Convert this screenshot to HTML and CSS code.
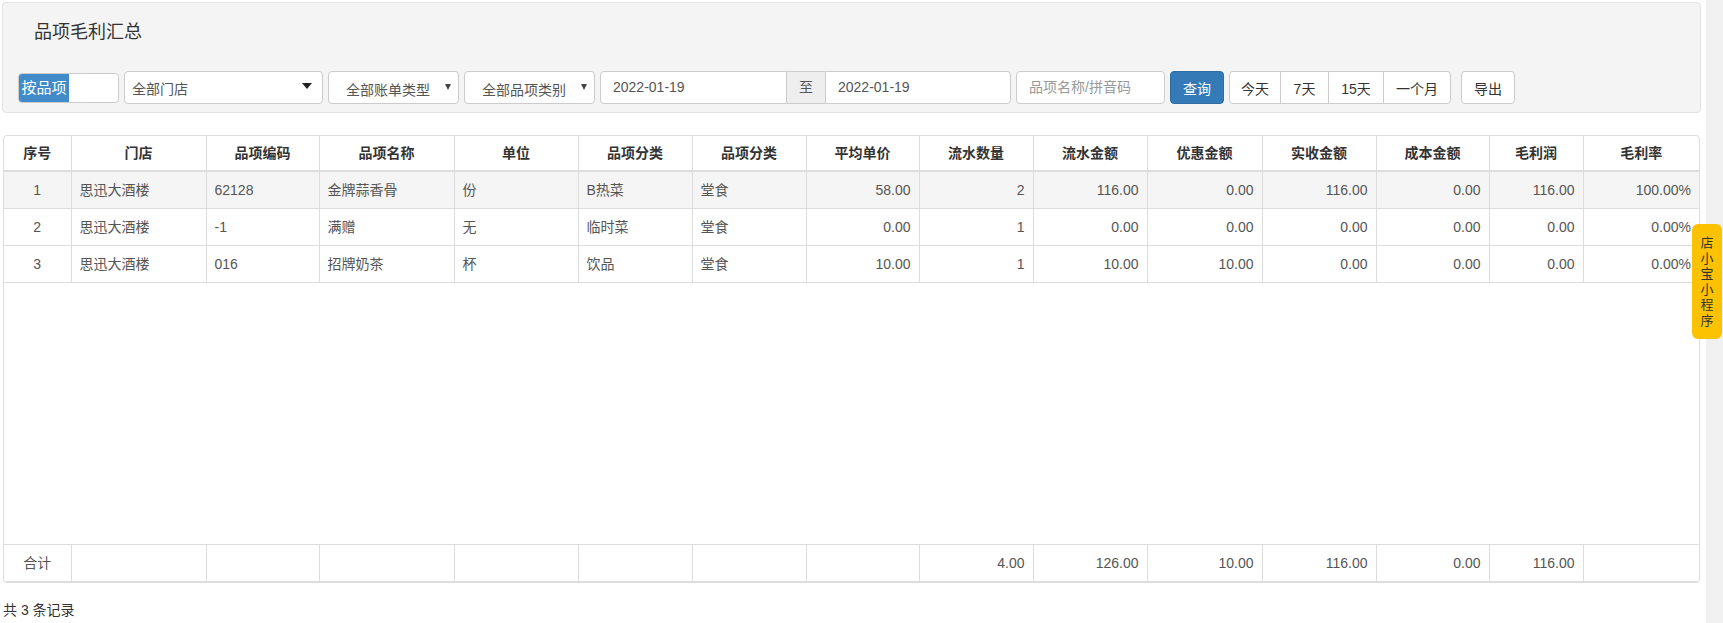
FILE: index.html
```html
<!DOCTYPE html>
<html lang="zh-CN">
<head>
  <meta charset="UTF-8">
  <title>品项毛利汇总</title>
  <link rel="stylesheet" href="styles.css">
</head>
<body>
  <div class="page">
    <div class="well">
      <h4 class="title">品项毛利汇总</h4>

      <div class="toolbar">
        <div class="switch"><span class="switch-on">按品项</span></div>

        <div class="select select-store">
          <span>全部门店</span>
          <i class="caret-big"></i>
        </div>
        <div class="select select-sm">
          <span>全部账单类型</span>
          <i class="caret-sm"></i>
        </div>
        <div class="select select-sm">
          <span>全部品项类别</span>
          <i class="caret-sm"></i>
        </div>

        <div class="date-range">
          <div class="input date-input">2022-01-19</div>
          <div class="addon">至</div>
          <div class="input date-input date-end">2022-01-19</div>
        </div>

        <div class="input search placeholder">品项名称/拼音码</div>

        <button class="btn btn-primary">查询</button>

        <div class="btn-group">
          <button class="btn btn-today">今天</button>
          <button class="btn btn-7">7天</button>
          <button class="btn btn-15">15天</button>
          <button class="btn btn-month">一个月</button>
        </div>

        <button class="btn btn-export">导出</button>
      </div>
    </div>

    <div class="grid">
      <table class="data">
        <colgroup>
          <col style="width:67px"><col style="width:135px"><col style="width:113px"><col style="width:135px">
          <col style="width:124px"><col style="width:114px"><col style="width:114px"><col style="width:113px">
          <col style="width:114px"><col style="width:114px"><col style="width:115px"><col style="width:114px">
          <col style="width:113px"><col style="width:94px"><col style="width:116px">
        </colgroup>
        <thead>
          <tr>
            <th>序号</th><th>门店</th><th>品项编码</th><th>品项名称</th><th>单位</th>
            <th>品项分类</th><th>品项分类</th><th>平均单价</th><th>流水数量</th><th>流水金额</th>
            <th>优惠金额</th><th>实收金额</th><th>成本金额</th><th>毛利润</th><th>毛利率</th>
          </tr>
        </thead>
        <tbody>
          <tr class="active">
            <td class="c">1</td><td>思迅大酒楼</td><td>62128</td><td>金牌蒜香骨</td><td>份</td>
            <td>B热菜</td><td>堂食</td><td class="r">58.00</td><td class="r">2</td><td class="r">116.00</td>
            <td class="r">0.00</td><td class="r">116.00</td><td class="r">0.00</td><td class="r">116.00</td><td class="r">100.00%</td>
          </tr>
          <tr>
            <td class="c">2</td><td>思迅大酒楼</td><td>-1</td><td>满赠</td><td>无</td>
            <td>临时菜</td><td>堂食</td><td class="r">0.00</td><td class="r">1</td><td class="r">0.00</td>
            <td class="r">0.00</td><td class="r">0.00</td><td class="r">0.00</td><td class="r">0.00</td><td class="r">0.00%</td>
          </tr>
          <tr>
            <td class="c">3</td><td>思迅大酒楼</td><td>016</td><td>招牌奶茶</td><td>杯</td>
            <td>饮品</td><td>堂食</td><td class="r">10.00</td><td class="r">1</td><td class="r">10.00</td>
            <td class="r">10.00</td><td class="r">0.00</td><td class="r">0.00</td><td class="r">0.00</td><td class="r">0.00%</td>
          </tr>
        </tbody>
      </table>

      <table class="data total">
        <colgroup>
          <col style="width:67px"><col style="width:135px"><col style="width:113px"><col style="width:135px">
          <col style="width:124px"><col style="width:114px"><col style="width:114px"><col style="width:113px">
          <col style="width:114px"><col style="width:114px"><col style="width:115px"><col style="width:114px">
          <col style="width:113px"><col style="width:94px"><col style="width:116px">
        </colgroup>
        <tr>
          <td class="c">合计</td><td></td><td></td><td></td><td></td>
          <td></td><td></td><td></td><td class="r">4.00</td><td class="r">126.00</td>
          <td class="r">10.00</td><td class="r">116.00</td><td class="r">0.00</td><td class="r">116.00</td><td></td>
        </tr>
      </table>
    </div>

    <p class="records">共 3 条记录</p>
  </div>

  <div class="scrollbar"></div>

  <!-- 右侧悬浮：店小宝小程序 -->
  <div class="side-tab">
    <span>店</span><span>小</span><span>宝</span><span>小</span><span>程</span><span>序</span>
  </div>
</body>
</html>
```

FILE: styles.css
```css
* {
  box-sizing: border-box;
}

body {
  margin: 0;
  height: 623px;
  overflow: hidden;
  display: flex;
  font-family: "Liberation Sans", "Noto Sans CJK SC", sans-serif;
  font-size: 14px;
  color: #333;
  background: #fff;
}

.page {
  flex: 1;
  padding: 2px 5px 0 2px;
}

.scrollbar {
  width: 18px;
  background: #f1f1f1;
}

/* 顶部查询区 */
.well {
  height: 111px;
  background: #f4f4f4;
  border: 1px solid #e3e3e3;
  border-radius: 4px;
  padding: 16px 15px 0;
}

.title {
  margin: 0 0 26px 16px;
  font-size: 18px;
  line-height: 26px;
  font-weight: normal;
  color: #333;
}

.toolbar {
  display: flex;
  align-items: center;
  gap: 5px;
  height: 33px;
}

.switch {
  width: 101px;
  height: 30px;
  border: 1px solid #ccc;
  border-radius: 4px;
  background: #fff;
  overflow: hidden;
}

.switch-on {
  display: block;
  width: 50px;
  height: 100%;
  background: #428bca;
  color: #fff;
  font-size: 15px;
  line-height: 28px;
  text-align: center;
}

.select {
  height: 33px;
  display: flex;
  align-items: center;
  justify-content: space-between;
  background: #fff;
  border: 1px solid #ccc;
  border-radius: 4px;
  color: #555;
}

.select-store {
  width: 199px;
  padding: 0 10px 0 7px;
}

.select-sm {
  width: 131px;
  padding: 3px 7px 0 17px;
}

.caret-big {
  width: 0;
  height: 0;
  border-top: 6px solid #222;
  border-left: 5px solid transparent;
  border-right: 5px solid transparent;
  margin-bottom: 4px;
}

.caret-sm {
  width: 0;
  height: 0;
  border-top: 6px solid #444;
  border-left: 3px solid transparent;
  border-right: 3px solid transparent;
  margin-bottom: 5px;
}

.date-range {
  display: flex;
}

.input {
  height: 33px;
  padding: 0 12px;
  line-height: 31px;
  background: #fff;
  border: 1px solid #ccc;
  border-radius: 4px;
  color: #555;
}

.date-input {
  width: 187px;
  border-radius: 4px 0 0 4px;
}

.date-end {
  width: 186px;
  border-radius: 0 4px 4px 0;
}

.addon {
  width: 38px;
  height: 33px;
  line-height: 31px;
  text-align: center;
  background: #eee;
  border-top: 1px solid #ccc;
  border-bottom: 1px solid #ccc;
  color: #555;
}

.search {
  width: 149px;
}

.placeholder {
  color: #999;
}

.btn {
  height: 33px;
  padding: 0;
  font-family: inherit;
  font-size: 14px;
  color: #333;
  background: #fff;
  border: 1px solid #ccc;
  border-radius: 4px;
  cursor: pointer;
}

.btn-primary {
  width: 54px;
  background: #337ab7;
  border-color: #2e6da4;
  color: #fff;
}

.btn-group {
  display: flex;
}

.btn-group .btn {
  border-radius: 0;
  margin-left: -1px;
}

.btn-group .btn:first-child {
  margin-left: 0;
  border-radius: 4px 0 0 4px;
}

.btn-group .btn:last-child {
  border-radius: 0 4px 4px 0;
}

.btn-today { width: 52px; }
.btn-7 { width: 49px; }
.btn-15 { width: 56px; }
.btn-month { width: 68px; }

.btn-export {
  width: 54px;
  margin-left: 5px;
}

/* 表格 */
.grid {
  margin: 22px 1px 0 1px;
  height: 448px;
  display: flex;
  flex-direction: column;
  border: 1px solid #ddd;
  border-radius: 4px;
  overflow: hidden;
}

.data {
  width: 100%;
  table-layout: fixed;
  border-collapse: collapse;
}

.data th,
.data td {
  border: 0;
  border-left: 1px solid #ddd;
  padding: 8px;
  line-height: 20px;
  white-space: nowrap;
  overflow: hidden;
}

.data th:first-child,
.data td:first-child {
  border-left: 0;
}

.data th {
  padding: 7px 8px;
  text-align: center;
  font-weight: bold;
  color: #333;
  border-bottom: 2px solid #ddd;
}

.data tbody td {
  border-bottom: 1px solid #ddd;
}

.data td {
  color: #555;
}

.data tr.active td {
  background: #f5f5f5;
}

.data .c { text-align: center; }
.data .r { text-align: right; }

.total {
  margin-top: auto;
}

.total td {
  border-top: 1px solid #ddd;
}

.records {
  margin: 17px 0 0 1px;
  line-height: 20px;
  color: #333;
}

.side-tab {
  position: fixed;
  left: 1692px;
  top: 224px;
  width: 30px;
  height: 115px;
  padding: 11px 0;
  display: flex;
  flex-direction: column;
  align-items: center;
  background: #fcc200;
  border-radius: 6px;
  font-size: 13px;
  line-height: 15.5px;
  color: #333;
}
```
